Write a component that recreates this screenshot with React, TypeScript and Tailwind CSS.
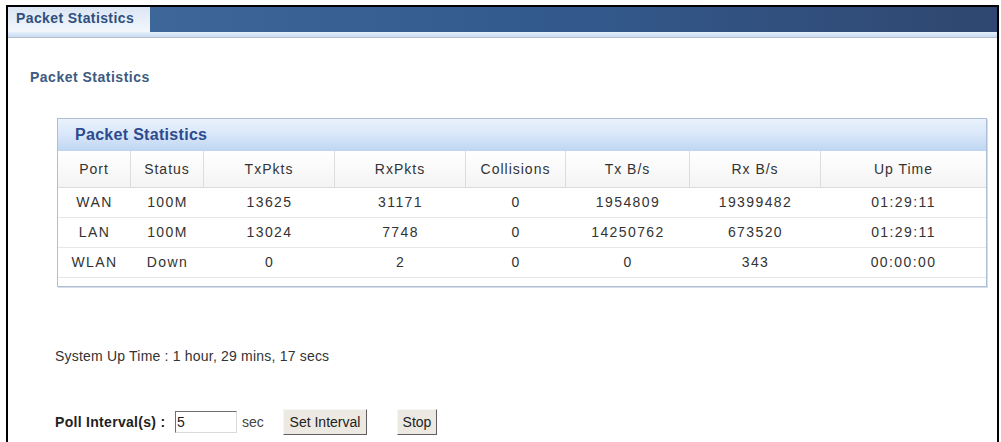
const columns = [
  { label: "Port", w: "w-[73px]" },
  { label: "Status", w: "w-[73px]" },
  { label: "TxPkts", w: "w-[131px]" },
  { label: "RxPkts", w: "w-[131px]" },
  { label: "Collisions", w: "w-[100px]" },
  { label: "Tx B/s", w: "w-[124px]" },
  { label: "Rx B/s", w: "w-[131px]" },
  { label: "Up Time", w: "flex-1" },
];

const rows = [
  ["WAN", "100M", "13625", "31171", "0", "1954809", "19399482", "01:29:11"],
  ["LAN", "100M", "13024", "7748", "0", "14250762", "673520", "01:29:11"],
  ["WLAN", "Down", "0", "2", "0", "0", "343", "00:00:00"],
];

const btn =
  "h-[26px] bg-[#ece9e2] border border-t-[#f6f6f6] border-l-[#f6f6f6] border-b-[#5f5f5f] border-r-[#5f5f5f] text-[14px] text-[#222] flex items-center justify-center";

export default function App() {
  return (
    <div className="w-[1001px] h-[442px] bg-white overflow-hidden font-['Liberation_Sans',Arial,sans-serif]">
      <div className="h-[5px]" />

      <div className="ml-[6px] w-[993px] h-[437px] border-l-2 border-t-2 border-r-2 border-black">
        {/* tab bar */}
        <div className="flex h-[25px]">
          <div className="w-[142px] bg-gradient-to-b from-[#dbe6f4] to-[#f3f7fc] pl-[8px] text-[14px] font-bold tracking-[0.4px] text-[#2f4f7f] leading-[23px]">
            Packet Statistics
          </div>
          <div className="flex-1 bg-gradient-to-r from-[#3d6699] via-[#33598c] to-[#2f4770]" />
        </div>
        <div className="h-[5px] bg-gradient-to-b from-[#e4effb] to-[#c9dcf2]" />
        <div className="h-px bg-[#b3bfce]" />

        <div className="pl-[22px] pt-[31px] text-[14px] leading-[16px] font-bold tracking-[0.5px] text-[#3d5a80]">
          Packet Statistics
        </div>

        {/* table box */}
        <div className="ml-[49px] mt-[33px] w-[930px] h-[169px] border border-[#aebfd5] shadow-[1px_1px_0_#d6dde6]">
          <div className="h-[32px] bg-gradient-to-b from-[#eaf2fc] via-[#d8e7f9] to-[#bed5f1] pl-[17px] text-[16px] font-bold tracking-[0.3px] text-[#2d4b8e] leading-[32px]">
            Packet Statistics
          </div>
          <div className="flex h-[37px] bg-gradient-to-b from-white to-[#f4f4f4] border-b border-[#dcdcdc]">
            {columns.map((c, i) => (
              <div
                key={c.label}
                className={`${c.w} flex items-center justify-center text-[14px] tracking-[1px] text-[#333] ${
                  i < columns.length - 1 ? "border-r border-[#dddddd]" : ""
                }`}
              >
                {c.label}
              </div>
            ))}
          </div>
          {rows.map((r, ri) => (
            <div key={ri} className="flex h-[30px] border-b border-[#e6e6e6]">
              {r.map((v, i) => (
                <div
                  key={i}
                  className={`${columns[i].w} flex items-center justify-center text-[14px] tracking-[1.4px] text-[#333]`}
                >
                  {v}
                </div>
              ))}
            </div>
          ))}
        </div>

        <div className="pl-[47px] mt-[61px] text-[14px] leading-[16px] tracking-[0.2px] text-[#333]">
          System Up Time : 1 hour, 29 mins, 17 secs
        </div>

        <div className="pl-[47px] mt-[45px] flex items-center h-[26px] text-[14px] text-[#222]">
          <span className="w-[120px] font-bold tracking-[0.3px]">Poll Interval(s) :</span>
          <input
            defaultValue="5"
            className="w-[62px] h-[22px] px-[1px] border border-t-[#6f6f6f] border-l-[#6f6f6f] border-b-[#dadada] border-r-[#dadada] text-[14px] outline-none"
          />
          <span className="w-[46px] pl-[5px] text-[#444]">sec</span>
          <button className={`${btn} w-[84px]`}>Set Interval</button>
          <span className="w-[30px]" />
          <button className={`${btn} w-[40px]`}>Stop</button>
        </div>
      </div>
    </div>
  );
}
